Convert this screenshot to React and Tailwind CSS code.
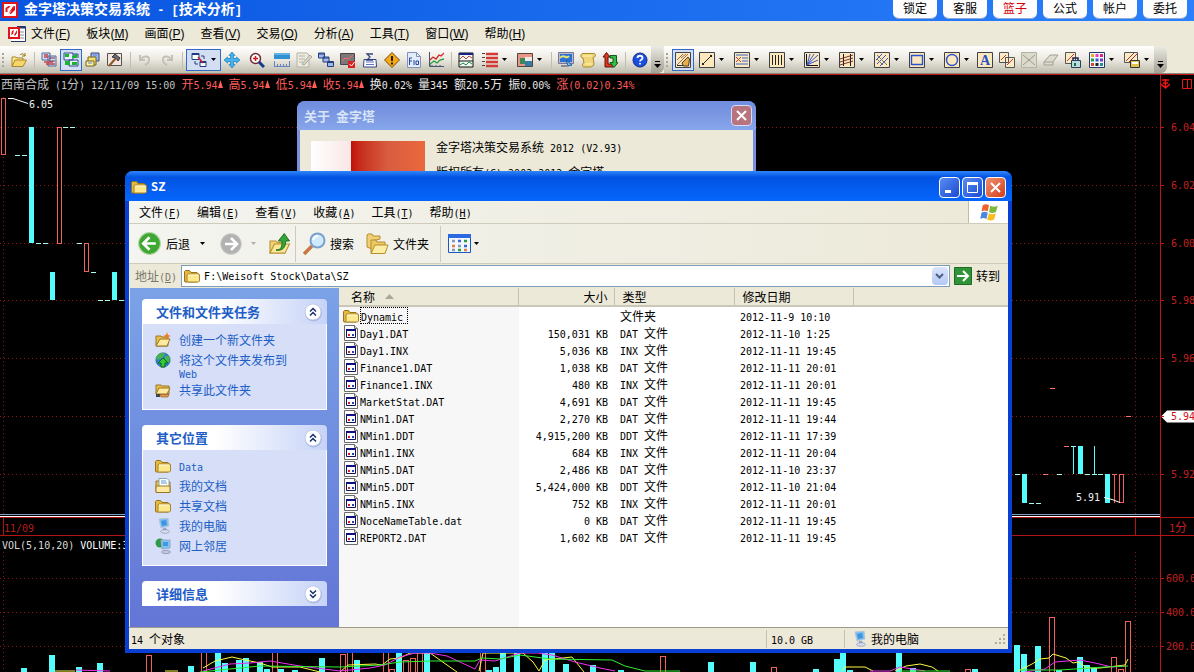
import { useState } from "react";

// Latin glyphs are half as wide as the Chinese ones
const Mix = ({ text }) => (
  <span className="whitespace-pre">
    {text.split(/([ -~]+)/).map((part, i) =>
      i % 2 ? (
        <span key={i} className="font-['DejaVu_Sans_Mono',monospace] text-[10px] leading-none">
          {part}
        </span>
      ) : (
        part
      )
    )}
  </span>
);

const Icon = ({ size = 16, children }) => (
  <svg width={size} height={size} viewBox="0 0 16 16" fill="none" className="shrink-0" aria-hidden="true">
    {children}
  </svg>
);

// yellow box shared by the drawing tools
const Tile = ({ children }) => (
  <Icon>
    <path d="M.5.5h15v15H.5z" fill="#fbe9bd" stroke="#404048" />
    {children}
  </Icon>
);

const Folder = ({ size = 16 }) => (
  <Icon size={size}>
    <path d="M.5 13V3.5l1-1h4l1.5 2h6l1 1V13l-1 1h-12z" fill="#e5b93e" stroke="#96731c" />
    <path d="M3 13.5V7l1-1h11l.5 1v6l-1 1H3.5z" fill="#fde88e" stroke="#a9832a" />
    <path d="M4 7h10" stroke="#fffbd8" />
  </Icon>
);

const Computer = ({ size = 16 }) => (
  <Icon size={size}>
    <path d="M4 1l9-1 1 8-8 2z" fill="#7cc0f2" stroke="#b8c6d8" />
    <path d="M6 3l5-1 1 5-5 1z" fill="#3f93e0" />
    <path d="M8 10h3l1 2H8z" fill="#9aa7c4" />
    <ellipse cx="10" cy="13.500" rx="4.500" ry="1.800" fill="#d7dcec" stroke="#7d87aa" strokeWidth=".6" />
  </Icon>
);

const Globe = () => (
  <>
    <circle cx="8" cy="8" r="7.200" fill="#2f7fd0" stroke="#1f5f86" strokeWidth=".6" />
    <path d="M2 4c3-4 7-3 8-2L8 5 5 7 1.500 8zM10 4l4 0c1 3 1 5-1 7l-3-2z" fill="#47b54a" />
  </>
);

const icons = {
  open: (
    <Icon>
      <path d="M1 14V5h4l1 1h6v3" fill="#fce693" stroke="#a8872a" />
      <path d="M1 14.500L4 8h11.500L12 14.500z" fill="#f6d66b" stroke="#a8872a" />
      <path d="M9 3c2-2 4-1 5 1m0-3v3h-3" stroke="#9b7410" />
    </Icon>
  ),
  report: (
    <Icon>
      <path d="M1 1h8v7H1zM7 4h8v10H7z" fill="#cfdff5" stroke="#53699c" />
      <path d="M3 3h4M3 5h4M3 10h9M5 12h9" stroke="#c3424f" strokeWidth="1.500" />
      <path d="M8 6h6M8 9h6" stroke="#7f3040" />
    </Icon>
  ),
  layout: (
    <Icon>
      <path d="M1 1h9v7H1zM6 8h9v6H6z" fill="#e9f1ff" stroke="#2d4c8c" />
      <path d="M2 2h4v3H2zM9 4l5-2v4H9zM2 9h5v4H2zM9 10h5v3H9z" fill="#19b52f" />
      <path d="M10 2h5v4" stroke="#2d4c8c" />
    </Icon>
  ),
  copy: (
    <Icon>
      <path d="M6 1h8v8H6z" fill="#9fb7ef" stroke="#38477d" />
      <path d="M3 5h8v8H3z" fill="#f7e06a" stroke="#6e6420" />
      <path d="M1 9h8v5H1z" fill="#fff3a4" stroke="#6e6420" />
      <path d="M3 11h4M8 3h4" stroke="#5a83d6" />
    </Icon>
  ),
  hammer: (
    <Icon>
      <path d="M.5 1.500h14v12H.5z" fill="#f3e4e1" stroke="#55524d" />
      <path d="M5 5l3-3 5 4-2 3-2-3z" fill="#6a6e7a" stroke="#2e3138" />
      <path d="M9 6L2 14" stroke="#8c5a27" strokeWidth="2" />
    </Icon>
  ),
  undo: (
    <Icon>
      <path d="M3 3v5h5M4 7c3-4 9-3 8 1 0 2-2 4-4 5" stroke="#c3c1b6" strokeWidth="2" />
    </Icon>
  ),
  redo: (
    <Icon>
      <path d="M13 3v5H8M12 7C9 3 3 4 4 8c0 2 2 4 4 5" stroke="#c3c1b6" strokeWidth="2" />
    </Icon>
  ),
  windows: (
    <Icon>
      <path d="M1 1.500h7v6H1zM9 9.500h6v5H9z" fill="#fff" stroke="#1c3c86" />
      <path d="M1 2h7M9 10h6" stroke="#1c3c86" strokeWidth="2" />
      <path d="M4 9v3h3M13 7V4h-3" stroke="#26407f" />
      <path d="M7 5l5 6" stroke="#c8202b" strokeWidth="1.500" />
    </Icon>
  ),
  move: (
    <Icon>
      <path
        d="M8 0l3 3.500H9.500v3h3V5L16 8l-3.500 3V9.500h-3v3H11L8 16l-3-3.500h1.500v-3h-3V11L0 8l3.500-3v1.500h3v-3H5z"
        fill="#45b4ee"
        stroke="#1878b8"
        strokeWidth=".7"
      />
    </Icon>
  ),
  zoom: (
    <Icon>
      <circle cx="6.500" cy="6.500" r="5" fill="#fff" stroke="#6d2a32" strokeWidth="1.500" />
      <path d="M4 6.500h5M6.500 4v5" stroke="#d01818" strokeWidth="1.500" />
      <path d="M10 10l5 5" stroke="#173a8e" strokeWidth="3" />
    </Icon>
  ),
  ruler: (
    <Icon>
      <path d="M0 1h16v6H0z" fill="#2f91d2" />
      <path d="M0 2h16" stroke="#9ad3f3" />
      <path d="M.5 9v6M3.500 12v3M6.500 12v3M9.500 12v3M12.500 12v3M15.500 9v6M0 14.500h16" stroke="#6484bd" />
    </Icon>
  ),
  note: (
    <Icon>
      <path d="M1 1h10l2 2v12H1z" fill="#eceadf" stroke="#b5b3a5" />
      <path d="M3 4h6M3 7h6M3 10h4" stroke="#b5b3a5" />
      <path d="M6 12L14 3l2 2-8 8z" fill="#d9d7c9" stroke="#a9a798" />
    </Icon>
  ),
  cascade: (
    <Icon>
      <path d="M.5 1h6v5h-6zM5 5h6v5H5zM9.500 9.500h6v5h-6z" fill="#9db9ee" stroke="#27407d" />
      <path d="M.5 2h6M5 6h6M9.500 10.500h6" stroke="#27407d" />
    </Icon>
  ),
  stop: (
    <Icon>
      <path d="M.5 1.500h14v11H.5z" fill="#7c7579" stroke="#494649" />
      <path d="M2 9l3-3 3 1 5-4" stroke="#ff6b6b" />
      <path d="M8 9h7v7H8z" fill="#db2020" />
      <path d="M9.500 12l2 2 3-4" stroke="#fff" />
    </Icon>
  ),
  sigma: (
    <Icon>
      <path d="M2 7.500L1.500 15h13L14 7.500z" fill="#fff" stroke="#33427f" />
      <path d="M11 2H5l3 3-3 3h6" stroke="#33427f" strokeWidth="1.300" />
      <path d="M4 10h8M4 12.500h8" stroke="#5a73c4" />
    </Icon>
  ),
  warn: (
    <Icon>
      <path d="M8 .5L15.500 8 8 15.500.5 8z" fill="#f5a81c" stroke="#7c4e0b" />
      <path d="M8 4v5M8 10.500v2" stroke="#2d1c00" strokeWidth="2" />
    </Icon>
  ),
  fio: (
    <Icon>
      <path d="M1.500.5h9l4 4v11h-13z" fill="#e3ecfb" stroke="#8193b8" />
      <path d="M10.500.5v4h4" stroke="#8193b8" />
      <path d="M3.500 13V6H6M3.500 9H6M8 8v5M10 9h2.500v3.500H10z" stroke="#27479f" />
    </Icon>
  ),
  lines: (
    <Icon>
      <path d="M1.500 0v14.500H16" stroke="#43536b" />
      <path d="M1 13h2M4 15v-2M8 15v-2M12 15v-2" stroke="#43536b" />
      <path d="M2 8l3-3 3 2 3-4 2 1 3-3" stroke="#d22a2a" strokeWidth="1.300" />
      <path d="M2 12l4-3 3 2 3-3 4-1" stroke="#2a9b3c" strokeWidth="1.300" />
    </Icon>
  ),
  split: (
    <Icon>
      <path d="M1 1h14v14H1z" fill="#f4f8f4" stroke="#111" />
      <path d="M1 2h14" stroke="#15208a" strokeWidth="2" />
      <path d="M1 9h14" stroke="#111" />
      <path d="M2 7l3-3 3 3 3-3 3 2" stroke="#c43" />
      <path d="M2 13l3-2 3 2 3-3 3 2" stroke="#284" />
    </Icon>
  ),
  redlist: (
    <Icon>
      <path d="M4 2h12M4 6h12M4 10h12M4 14h12" stroke="#d33a35" strokeWidth="2.600" />
      <path d="M0 1.500h3M0 5.500h3M0 9.500h3M0 13.500h3" stroke="#5e3838" />
    </Icon>
  ),
  palette: (
    <Icon>
      <path d="M.5 1.500h15v13H.5z" fill="#e9958a" stroke="#51463b" />
      <path d="M3 6h5v6H3z" fill="#3a8a56" />
      <path d="M8 5h7v4H8z" fill="#ecebe7" />
      <path d="M8 9h7v5H8z" fill="#397ba8" />
    </Icon>
  ),
  monitor: (
    <Icon>
      <path d="M.5.500h15v11H.5z" fill="#b9b9cf" stroke="#777896" />
      <path d="M2 2h12v8H2z" fill="#2e71d6" />
      <path d="M2 6c4-5 6 2 9-2" stroke="#e2e36c" strokeWidth="2" />
      <path d="M8 8l6 5-4 1z" fill="#78c2ee" stroke="#285a9c" />
      <path d="M3 14h7" stroke="#889" strokeWidth="2" />
    </Icon>
  ),
  scroll: (
    <Icon>
      <path
        d="M3 1.500h11c2 0 2 4-1 4l1 6c0 2-2 3.500-3 3.500H4c-2 0-2-4 0-4L3 6C0 6 0 2 3 1.500z"
        fill="#f0d678"
        stroke="#a68c34"
      />
      <path d="M3 4h9M5 12h7" stroke="#fff2b4" />
    </Icon>
  ),
  trade: (
    <Icon>
      <path d="M4.500.5L8 5H6v7h5v3H3V5H1z" fill="#e33420" stroke="#5c140c" />
      <path d="M8 3.500h6.500v7H16L12 15.500 8 10.500h3V6H8z" fill="#35bd45" stroke="#13571b" />
    </Icon>
  ),
  help: (
    <Icon>
      <circle cx="8" cy="8" r="7" fill="#1b4de0" stroke="#0c2a8a" />
      <path d="M5.500 6c0-3 5-3 5 0 0 2-2.500 1.500-2.500 3.500M8 11v1.500" stroke="#fff" strokeWidth="1.800" />
    </Icon>
  ),
  pencil: (
    <Icon>
      <path d="M.5.5h15v15H.5z" fill="#f7eacb" stroke="#404048" />
      <path d="M2 8l6-6M2 13L13 2M6 6l5-4" stroke="#a5682c" />
      <path d="M7 11l6-6 1.500 2-1 7h-5z" fill="#e9b04a" stroke="#4a3b26" />
      <path d="M2 13.500h6" stroke="#333" />
    </Icon>
  ),
  seg: (
    <Tile>
      <path d="M4 12l8-8" stroke="#222" />
      <path d="M3 11h2v2H3zM11 3h2v2h-2z" fill="#222" />
    </Tile>
  ),
  fib: (
    <Tile>
      <path d="M2 3h12M8 6h6M8 9h6M2 12h12" stroke="#3a63c8" />
      <path d="M2 5l5 5M7 5l-5 5" stroke="#d23838" />
    </Tile>
  ),
  bars: (
    <Tile>
      <path d="M3.500 3v10M6.500 3v10M9.500 3v10M12.500 3v10" stroke="#222" />
    </Tile>
  ),
  fan: (
    <Tile>
      <path d="M2.500 2v11.500H14" stroke="#111" />
      <path d="M3 13L6 2M3 13l7-11M3 13L14 3M3 13l11-5" stroke="#3858c8" />
    </Tile>
  ),
  gann: (
    <Tile>
      <path d="M4.500 2v12M11.500 2v12" stroke="#111" />
      <path d="M1 7l13-4M1 10l13-4M1 13l13-4" stroke="#7a3030" />
    </Tile>
  ),
  cross: (
    <Tile>
      <path d="M3 12L12 3M6 14l8-8M2 8l6-6" stroke="#3858c8" />
      <path d="M3 3l10 10M3 7l6 6" stroke="#777" />
    </Tile>
  ),
  rect: (
    <Tile>
      <path d="M2.500 3.500h11v9h-11z" stroke="#2a52d0" strokeWidth="1.400" />
    </Tile>
  ),
  circle: (
    <Tile>
      <circle cx="8" cy="8" r="5.500" stroke="#2a52d0" strokeWidth="1.400" />
    </Tile>
  ),
  letter: (
    <Tile>
      <text x="8" y="13" textAnchor="middle" fontSize="14" fontWeight="700" fill="#2450c8" fontFamily="Liberation Serif, serif">
        A
      </text>
    </Tile>
  ),
  dup: (
    <Icon>
      <path d="M.5.5h9v10h-9zM6.500 5.500h9v10h-9z" fill="#fbeac6" stroke="#555" />
      <path d="M2 8l5-5M8 13l6-6" stroke="#c33" />
    </Icon>
  ),
  del: (
    <Icon>
      <path d="M.5.5h15v15H.5z" fill="#dcdacb" stroke="#b4b2a2" />
      <path d="M2 3l12 10M14 3L2 13" stroke="#9d9b8c" />
    </Icon>
  ),
  eraser: (
    <Icon>
      <path d="M1 10l6-7h8l-5 7v3H1zM1 10h9" fill="#dddbce" stroke="#a2a092" />
    </Icon>
  ),
  lock: (
    <Icon>
      <path d="M.5.5h10v11H.5z" fill="#fbeac6" stroke="#555" />
      <path d="M2 9l7-7" stroke="#c33" />
      <path d="M8 9V6h5v3" stroke="#225" strokeWidth="1.500" />
      <path d="M6.500 8.500h9v7h-9z" fill="#bcd9e6" stroke="#245" />
      <path d="M10 11v3" stroke="#0a7a30" strokeWidth="2" />
    </Icon>
  ),
  colors: (
    <Icon>
      <path d="M.5.5h15v15H.5z" fill="#f3f6fb" stroke="#20386a" />
      <path d="M2 2h3v3H2z" fill="#e8b020" />
      <path d="M6.500 2h3v3h-3z" fill="#e63cc8" />
      <path d="M11 2h3v3h-3z" fill="#d62a80" />
      <path d="M2 6.500h3v3H2z" fill="#2a9a40" />
      <path d="M6.500 6.500h3v3h-3z" fill="#3555d8" />
      <path d="M11 6.500h3v3h-3z" fill="#7a3ac8" />
      <path d="M2 11h3v3H2z" fill="#d84b2a" />
      <path d="M6.500 11h3v3h-3z" fill="#222" />
      <path d="M11 11h3v3h-3z" fill="#288a9c" />
    </Icon>
  ),
  save: (
    <Icon>
      <path d="M.5.5h13v10H.5z" fill="#fbeac6" stroke="#555" />
      <path d="M2 9l8-8M5 10l8-8" stroke="#a33" />
      <path d="M6.500 8.500h9v7h-9z" fill="#e3c049" stroke="#333" />
      <path d="M8 11h6" stroke="#fff" strokeWidth="2" />
    </Icon>
  ),
};

// [icon, has drop-down, pressed]; "|" is a divider, "_" a narrow space
const mainTools = [
  ["open"], "|", ["report"], ["layout", false, true], ["copy"], ["hammer"], "|", ["undo"], ["redo"], "|",
  ["windows", true, true], ["move"], "_", ["zoom"], "_", ["ruler"], ["note"], ["cascade"], ["stop"], ["sigma"],
  ["warn"], ["fio"], ["lines"], "|", ["split"], ["redlist", true], ["palette", true], "|", ["monitor"],
  ["scroll"], ["trade"], "|", ["help"],
];

const drawTools = [
  ["pencil", false, true], ["seg", true], ["fib", true], ["bars", true], ["fan", true], ["gann", true],
  ["cross", true], ["rect", true], ["circle", true], ["letter"], ["dup"], ["del"], ["eraser"], ["lock"],
  ["colors", true], ["save", true],
];

const ToolStrip = ({ tools }) => (
  <div className="flex items-center h-[27px] rounded-r-md bg-gradient-to-b from-white via-[#ebe9e0] to-[#bfbdae]">
    <div className="w-2 pl-0.5">
      <svg width="2" height="16" aria-hidden="true">
        <path d="M1 1v15" stroke="#aaa898" strokeWidth="2" strokeDasharray="2 2" />
      </svg>
    </div>
    {tools.map((tool, i) => {
      if (tool === "_") return <span key={i} className="w-[3px]" />;
      if (tool === "|")
        return (
          <span key={i} className="flex justify-center w-2">
            <span className="w-px h-4 bg-[#c0beb0]" />
          </span>
        );
      const [name, drop, on] = tool;
      return (
        <button
          key={i}
          aria-label={name}
          className={`flex items-center h-[22px] border ${drop ? "w-[35px] pl-1 gap-1" : "w-[22px] justify-center"} ${
            on ? "border-[#316ac5] bg-[#d3def3]" : "border-transparent"
          }`}
        >
          {icons[name]}
          {drop && <Caret />}
        </button>
      );
    })}
    <span className="flex items-end justify-center w-[13px] h-[27px] pb-1 rounded-r-md bg-gradient-to-b from-[#ecebe4] to-[#a3a194]">
      <svg width="7" height="8" aria-hidden="true">
        <path d="M1 .5h5" stroke="#000" />
        <path d="M0 3h7L3.500 7z" fill="#000" />
      </svg>
    </span>
  </div>
);

const Caret = ({ color = "#000" }) => (
  <svg width="5" height="3" className="shrink-0" aria-hidden="true">
    <path d="M0 0h5L2.500 3z" fill={color} />
  </svg>
);

const AppLogo = () => (
  <Icon>
    <path d="M0 0h16v16H0z" fill="#e0141c" />
    <path d="M2 2h12v12H2z" fill="#fff" />
    <path d="M3.500 10V6l3-2h2l-2 2.500h-1V10zM6 12l5-7.500 2-.5v4l-4 4H7.500L10 8z" fill="#e0141c" />
  </Icon>
);

const mainMenu = [
  ["文件", "F"], ["板块", "M"], ["画面", "P"], ["查看", "V"], ["交易", "O"],
  ["分析", "A"], ["工具", "T"], ["窗口", "W"], ["帮助", "H"],
];
const topTabs = ["锁定", "客服", "篮子", "公式", "帐户", "委托"];

const MainHeader = () => (
  <header>
    <div className="flex justify-between h-[21px] bg-gradient-to-r from-[#0855e0] to-[#2b80fb]">
      <div className="flex items-center gap-1.5 pl-0.5 pb-0.5 text-white">
        <AppLogo />
        <h1 className="text-sm font-bold leading-4 whitespace-pre">
          金字塔决策交易系统<span className="font-['Liberation_Mono',monospace] text-[12px]"> - [</span>技术分析
          <span className="font-['Liberation_Mono',monospace] text-[12px]">]</span>
        </h1>
      </div>
      <div className="flex gap-1.5 pr-[7px]">
        {topTabs.map((t) => (
          <button
            key={t}
            className={`w-11 h-[19px] pb-0.5 rounded-b-md bg-[#fdfdfd] border-b border-[#8fa9d8] text-[12px] leading-4 ${
              t === "篮子" ? "text-[#d8000c]" : "text-black"
            }`}
          >
            {t}
          </button>
        ))}
      </div>
    </div>
    <nav className="flex items-center h-[25px] bg-[#ece9d8] font-['Liberation_Sans','Noto_Sans_CJK_SC',sans-serif] text-[12px]">
      <div className="flex items-center w-[31px] pl-2">
        <svg width="18" height="16" aria-hidden="true">
          <path d="M9 .5h8.500v15H3" fill="#fff" stroke="#26346f" />
          <path d="M9 1.500h8" stroke="#26346f" strokeWidth="2" />
          <path d="M12 6h4M12 9h4M12 12h4" stroke="#889" />
          <path d="M0 1h12v12H0z" fill="#e0141c" />
          <path d="M2 3h8v8H2z" fill="#fff" />
          <path d="M3 9l1-4 2-1-1 4zM6 9l3-5v3L7 10z" fill="#e0141c" />
        </svg>
      </div>
      <div className="flex gap-4">
        {mainMenu.map(([label, key]) => (
          <button key={key} className="whitespace-nowrap">
            {label}(<u>{key}</u>)
          </button>
        ))}
      </div>
    </nav>
    <div className="flex h-[27px] bg-[#ece9d8]">
      <ToolStrip tools={mainTools} />
      <ToolStrip tools={drawTools} />
    </div>
    <div className="h-0.5 bg-[#c01018] border-t border-[#8a8878]" />
  </header>
);

const quotes = [
  ["西南合成", "text-[#c0c0c0]"], ["(1分)", "text-[#c0c0c0]"], ["12/11/09", "text-[#c0c0c0]"],
  ["15:00", "text-[#c0c0c0]"], ["开5.94", "text-[#ff5c5c]", 1], ["高5.94", "text-[#ff5c5c]", 1],
  ["低5.94", "text-[#ff5c5c]", 1], ["收5.94", "text-[#ff5c5c]", 1], ["换0.02%", "text-[#e8e8e8]"],
  ["量345", "text-[#e8e8e8]"], ["额20.5万", "text-[#e8e8e8]"], ["振0.00%", "text-[#e8e8e8]"],
  ["涨(0.02)0.34%", "text-[#ff5c5c]"],
];

// candles: x, top, bottom
const downBars = [
  [29, 127, 243], [50, 272, 300], [112, 272, 300], [1022, 474, 503], [1078, 446, 474], [1105, 474, 503],
];
const upBars = [[1, 98, 154], [57, 127, 243], [84, 243, 271], [1119, 474, 502]];
const flats = [
  [15, 155], [22, 155], [63, 127], [70, 127], [36, 243], [43, 243], [77, 243], [91, 272], [98, 300],
  [105, 300], [119, 300], [1015, 474], [1057, 474], [1071, 446], [1085, 474], [1092, 474], [1098, 474],
  [1029, 503], [1036, 503],
];
const redFlats = [[1050, 388], [1126, 416], [1064, 446], [1043, 474], [1112, 474]];
const priceLevels = [
  [127, "6.04"], [185, "6.02"], [243, "6.00"], [300, "5.98"], [358, "5.96"], [416, "5.94"], [474, "5.92"],
];

// volume: x, top
const volDown = [
  [21, 668], [49, 655], [76, 667], [97, 663], [188, 666], [215, 653], [222, 663], [236, 660], [243, 658],
  [257, 662], [264, 669], [278, 669], [292, 670], [319, 658], [354, 660], [396, 653], [424, 653], [486, 670],
  [493, 667], [500, 653], [514, 653], [542, 653], [549, 653], [563, 664], [590, 665], [618, 670], [708, 662],
  [750, 662], [813, 669], [834, 659], [840, 653], [847, 670], [896, 653], [910, 668], [972, 669], [1014, 645],
  [1021, 654], [1035, 646], [1056, 670], [1077, 657], [1084, 665], [1091, 668],
];
const volUp = [
  [146, 655], [201, 650], [272, 650], [340, 654], [347, 650], [383, 650], [389, 669], [403, 660], [410, 658],
  [417, 650], [480, 650], [660, 656], [771, 667], [965, 669], [1049, 617], [1111, 657], [1118, 669], [1125, 621],
];
const volLevels = [[578, "600.0"], [612, "400.0"], [646, "200.0"]];

const Dots = ({ levels }) => (
  <g stroke="#8a1616" strokeDasharray="1 3">
    {levels.map(([y]) => (
      <path key={y} d={`M0 ${y + 0.5}H1160`} />
    ))}
  </g>
);

const PriceChart = () => (
  <svg className="block w-full h-[425px]" viewBox="0 92 1160 425" preserveAspectRatio="xMinYMin slice" role="img" aria-label="K线图">
    <Dots levels={priceLevels} />
    <path d="M3.500 97v417M1135.500 97v417" stroke="#8a1616" strokeDasharray="1 3" />
    {downBars.map(([x, a, b]) => (
      <rect key={x} x={x} y={a} width="5" height={b - a} fill="#54fcfc" />
    ))}
    {upBars.map(([x, a, b]) => (
      <rect key={x} x={x + 0.5} y={a + 0.5} width="4" height={b - a} fill="#000" stroke="#f0625c" />
    ))}
    {flats.map(([x, y]) => (
      <rect key={`${x}-${y}`} x={x} y={y} width="5" height="1" fill="#a8fcf4" />
    ))}
    {redFlats.map(([x, y]) => (
      <rect key={x} x={x} y={y} width="5" height="1" fill="#fc7068" />
    ))}
    <path d="M1073.500 446v28M1094.500 446v28" stroke="#54fcfc" />
    <path d="M1114.500 474v29" stroke="#fc5450" />
    <path d="M8 98.500h5l15 5M1104 497.500l8 2 8 3" stroke="#fff" fill="none" />
    <g fill="#f0f0f0" fontSize="10" fontFamily="DejaVu Sans Mono, monospace">
      <text x="29" y="108">6.05</text>
      <text x="1076" y="501">5.91</text>
    </g>
    <path d="M0 514.500h1160" stroke="#7f9cc0" />
    <path d="M0 516.500h1160" stroke="#fff" />
  </svg>
);

const VolumeChart = () => (
  <svg className="block w-full h-[120px]" viewBox="0 552 1160 120" preserveAspectRatio="xMinYMin slice" role="img" aria-label="成交量">
    <Dots levels={volLevels} />
    <path d="M3.500 552v120M1135.500 552v120" stroke="#8a1616" strokeDasharray="1 3" />
    {volUp.map(([x, y]) => (
      <rect key={x} x={x + 0.5} y={y + 0.5} width="5" height="60" fill="#000" stroke="#f0625c" />
    ))}
    {volDown.map(([x, y]) => (
      <rect key={x} x={x} y={y} width="6" height="40" fill="#54fcfc" />
    ))}
    <g fill="none">
      <path
        stroke="#fcfc40"
        d="M55 671h20M165 671h13M203 668l12-7 17-4 13 3 15 3 12 4h28l20 5M340 672l8-7 27-1 7 1 8-6 10-1 10-5h20l27 19M479 671l4-18h40l10 9 6 9 6-11 27-3 12 15M842 671l3-4h20l8 4M895 671l11-5 14-2 12 3 6 4M1018 671l14-7 8-5 9-1 4-4 13 4 7 5 5-1 9 6h13l25-3 3-6"
      />
      <path
        stroke="#f030f0"
        d="M76 670l34 1M203 671l27-7 20-1 20-2 30 5 40 5 30-3 15-3 15-8 15-4h15l17 3 13 6 15 7 5-9 15 1 25-8h18l14 2 23 7 25 6 15 3M870 671h20l10-4 25 4M1025 672l20-3 10-7 25-2 15 3 17 4 13-1"
      />
      <path
        stroke="#30f030"
        d="M200 672l60-6 80 1 40-2 20-3 30-1h45l7-3 18 1 20-4 30 4 62 1 13 6 20 5h35M900 671h50M1020 670h40l45-3 23-1"
      />
    </g>
  </svg>
);

const StockChart = () => (
  <main className="flex bg-black text-[12px]">
    <section className="flex-1 min-w-0">
      <div className="flex items-center gap-1.5 h-[17px] pl-px leading-4">
        {quotes.map(([text, color, up]) => (
          <span key={text} className={`flex items-center ${color}`}>
            <Mix text={text} />
            {up && (
              <svg width="5" height="8" aria-hidden="true">
                <path d="M2.500 0L5 8H0z" fill="#ff5c5c" />
              </svg>
            )}
          </span>
        ))}
      </div>
      <PriceChart />
      <div className="flex items-center justify-between h-[19px] pl-[3px] pr-6 border-y border-[#b01414] text-[#b41c1c]">
        <span className="border-l border-[#b01414] leading-[17px]">
          <Mix text="11/09" />
        </span>
        <span className="w-px h-full bg-[#b01414]" />
      </div>
      <div className="flex gap-1.5 h-4 pl-0.5 text-[#d8d8d8] leading-4">
        <Mix text="VOL(5,10,20)" />
        <span className="text-white">
          <Mix text="VOLUME:345.000" />
        </span>
      </div>
      <VolumeChart />
    </section>
    <aside className="w-[34px] shrink-0 overflow-hidden border-l border-[#c01414] text-[#c02020]">
      <div className="flex items-center gap-3 h-[17px]">
        <svg width="9" height="10" className="shrink-0" aria-hidden="true">
          <path d="M4.500 0v9M1 1h7M0 5l4.500 4L9 5M2 4h5" stroke="#f01414" strokeWidth="1.500" fill="none" />
        </svg>
        <svg width="10" height="10" className="shrink-0" aria-hidden="true">
          <path d="M.5.5h9v9h-9zM5.500 0v10" stroke="#f01414" fill="none" />
        </svg>
      </div>
      <svg className="block h-[425px]" width="33" viewBox="0 92 33 425" aria-hidden="true">
        <path d="M0 416.500l6-6h27v12H6z" fill="#fff" />
        {priceLevels.map(([y, label]) => (
          <g key={y}>
            <path d={`M0 ${y + 0.5}h3`} stroke="#c01414" />
            <text x="10" y={y + 4} fill={label === "5.94" ? "#d01010" : "#c02020"} fontSize="10" fontFamily="DejaVu Sans Mono, monospace">
              {label}
            </text>
          </g>
        ))}
      </svg>
      <div className="h-[19px] pl-2 border-y border-[#b01414] leading-[17px]">
        <Mix text="1分" />
      </div>
      <svg className="block h-[136px]" width="33" viewBox="0 536 33 136" aria-hidden="true">
        {volLevels.map(([y, label]) => (
          <g key={y}>
            <path d={`M0 ${y + 0.5}h3`} stroke="#c01414" />
            <text x="5" y={y + 4} fill="#c02020" fontSize="10" fontFamily="DejaVu Sans Mono, monospace">
              {label}
            </text>
          </g>
        ))}
      </svg>
    </aside>
  </main>
);

const AboutDialog = () => (
  <div className="absolute left-[297px] top-[101px] w-[459px] h-[110px] px-[3px] rounded-t-lg bg-[#7a8fdd]">
    <div className="flex items-center justify-between -mx-[3px] h-[29px] pl-[7px] pr-1 rounded-t-lg bg-gradient-to-b from-[#6f8ce0] via-[#7c98e2] to-[#86a6ec] text-[13px] font-bold text-[#d8e4f8]">
      <span>关于&nbsp; 金字塔</span>
      <button aria-label="关闭" className="grid place-items-center w-[21px] h-[21px] rounded border border-[#d8dcf4] bg-[#b8747e]">
        <svg width="11" height="11" aria-hidden="true">
          <path d="M1 1l9 9M10 1l-9 9" stroke="#fff" strokeWidth="2" />
        </svg>
      </button>
    </div>
    <div className="flex gap-[11px] h-20 pl-[11px] pt-[11px] bg-[#ece9d8] text-[12px]">
      <div className="flex w-[114px] h-16">
        <div className="w-10 bg-gradient-to-r from-white to-[#fbe6e6]" />
        <div className="flex-1 bg-gradient-to-r from-[#c01008] via-[#d85c40] to-[#ea683c]" />
      </div>
      <div className="leading-3">
        <p>
          <Mix text="金字塔决策交易系统 2012 (V2.93)" />
        </p>
        <p className="pt-3">
          <Mix text="版权所有(C) 2002-2012 金字塔" />
        </p>
      </div>
    </div>
  </div>
);

const files = [
  ["Dynamic", "", "文件夹", "2012-11-9 10:10"],
  ["Day1.DAT", "150,031 KB", "DAT 文件", "2012-11-10 1:25"],
  ["Day1.INX", "5,036 KB", "INX 文件", "2012-11-11 19:45"],
  ["Finance1.DAT", "1,038 KB", "DAT 文件", "2012-11-11 20:01"],
  ["Finance1.INX", "480 KB", "INX 文件", "2012-11-11 20:01"],
  ["MarketStat.DAT", "4,691 KB", "DAT 文件", "2012-11-11 19:45"],
  ["NMin1.DAT", "2,270 KB", "DAT 文件", "2012-11-11 19:44"],
  ["NMin1.DDT", "4,915,200 KB", "DDT 文件", "2012-11-11 17:39"],
  ["NMin1.INX", "684 KB", "INX 文件", "2012-11-11 20:04"],
  ["NMin5.DAT", "2,486 KB", "DAT 文件", "2012-11-10 23:37"],
  ["NMin5.DDT", "5,424,000 KB", "DDT 文件", "2012-11-10 21:04"],
  ["NMin5.INX", "752 KB", "INX 文件", "2012-11-11 20:01"],
  ["NoceNameTable.dat", "0 KB", "DAT 文件", "2012-11-11 19:45"],
  ["REPORT2.DAT", "1,602 KB", "DAT 文件", "2012-11-11 19:45"],
];

const FileIcon = () => (
  <Icon>
    <path d="M1.500.5h10l3 3v12h-13z" fill="#fff" stroke="#6c6c6c" />
    <path d="M11.500.5v3h3" fill="#ddd" stroke="#6c6c6c" />
    <path d="M3.500 4.500h9v8h-9z" fill="#fff" stroke="#101060" />
    <path d="M3 5h10" stroke="#101080" strokeWidth="2" />
    <path d="M5 9h2v2H5z" fill="#d02020" />
    <path d="M9 9h2v2H9z" fill="#2040c0" />
  </Icon>
);

const FileTable = () => (
  <div className="flex-1 bg-[linear-gradient(to_right,#f7f7f7_180px,#fff_180px)]">
    <table className="w-full table-fixed border-collapse text-[12px] leading-[17px] whitespace-nowrap">
      <colgroup>
        <col className="w-[179px]" />
        <col className="w-24" />
        <col className="w-[120px]" />
        <col className="w-[119px]" />
        <col />
      </colgroup>
      <thead className="bg-[#ece9d8] border-b-2 border-[#cbc7b8] text-left">
        <tr className="h-[17px]">
          <th scope="col" className="pl-3 font-normal border-r border-[#c6c2b0]">
            <span className="flex items-center gap-2.5">
              名称
              <svg width="9" height="5" aria-hidden="true">
                <path d="M4.500 0L9 5H0z" fill="#aca899" />
              </svg>
            </span>
          </th>
          <th scope="col" className="pr-1.5 text-right font-normal border-r border-[#c6c2b0]">大小</th>
          <th scope="col" className="pl-2 font-normal border-r border-[#c6c2b0]">类型</th>
          <th scope="col" className="pl-2 font-normal border-r border-[#c6c2b0]">修改日期</th>
          <th />
        </tr>
      </thead>
      <tbody>
        {files.map(([name, size, type, date], i) => (
          <tr key={name} className="h-[17px]">
            <td className="pl-1">
              <span className="flex items-center gap-px h-[17px]">
                {i === 0 ? <Folder /> : <FileIcon />}
                <span className={i === 0 ? "h-[17px] pr-1 leading-[15px] border border-dotted border-black" : ""}>
                  <Mix text={name} />
                </span>
              </span>
            </td>
            <td className="pr-1.5 text-right"><Mix text={size} /></td>
            <td className="pl-1.5"><Mix text={type} /></td>
            <td className="pl-1.5"><Mix text={date} /></td>
            <td />
          </tr>
        ))}
      </tbody>
    </table>
  </div>
);

const NewFolder = () => (
  <Icon>
    <path d="M1 4h5l1 1h6v9H1z" fill="#e9bd4a" stroke="#9a7725" />
    <path d="M1 14L5 7h10l-3 7z" fill="#fdeaa0" stroke="#9a7725" />
    <path d="M12 0l1 3 3 1-3 1-1 3-1-3-3-1 3-1z" fill="#f07820" />
  </Icon>
);

const Publish = () => (
  <Icon>
    <Globe />
    <path d="M8 6l5 5h-3v4H6v-4H3z" fill="#37c837" stroke="#0c6a18" />
  </Icon>
);

const Share = () => (
  <Icon>
    <path d="M1 3h5l1 1h7v8H1z" fill="#e9bd4a" stroke="#9a7725" />
    <path d="M1 12l3-6h11l-3 6z" fill="#fdeaa0" stroke="#9a7725" />
    <path d="M1 12h4v3H1z" fill="#444" />
    <path d="M5 13c3-2 5 1 9-1l-1 3H6z" fill="#e89a50" stroke="#8a5020" strokeWidth=".6" />
  </Icon>
);

const Documents = () => (
  <Icon>
    <path d="M1 14V3h4l1 1h9v10z" fill="#e9bd4a" stroke="#9a7725" />
    <path d="M4 .5h8l2 2V9H4z" fill="#fff" stroke="#8aa" />
    <path d="M6 3h5M6 5h6" stroke="#5a9ad8" />
    <path d="M1 14.500V8h14v6.500z" fill="#fdeaa0" stroke="#9a7725" />
  </Icon>
);

const Network = () => (
  <Icon>
    <circle cx="5" cy="5" r="4.500" fill="#2f9a4a" />
    <path d="M6 2l9 0v8l-8 1z" fill="#7cc4f4" stroke="#9aa7c4" />
    <path d="M8 4h5v4H8z" fill="#4298e0" />
    <ellipse cx="11" cy="14" rx="4.500" ry="1.600" fill="#c5cae4" stroke="#6b7498" strokeWidth=".6" />
  </Icon>
);

const taskLinks = [
  [<NewFolder />, "创建一个新文件夹"],
  [<Publish />, "将这个文件夹发布到", "Web"],
  [<Share />, "共享此文件夹"],
];
const placeLinks = [
  [<Folder />, "Data"],
  [<Documents />, "我的文档"],
  [<Folder />, "共享文档"],
  [<Computer />, "我的电脑"],
  [<Network />, "网上邻居"],
];

const SidePanel = ({ title, links, startOpen = true }) => {
  const [open, setOpen] = useState(startOpen);
  return (
    <section>
      <button
        onClick={() => setOpen(!open)}
        className="flex items-center justify-between w-full h-[25px] pl-3.5 pr-1 rounded-t bg-gradient-to-r from-white from-40% to-[#c6d3f7] text-[13px] font-bold text-[#215dc6]"
      >
        {title}
        <svg width="20" height="20" viewBox="0 0 20 20" aria-hidden="true">
          <circle cx="10.500" cy="11" r="8.500" fill="#a9b8e0" />
          <circle cx="10" cy="10" r="8" fill="#fff" stroke="#b8c4e6" strokeWidth=".8" />
          <path
            d={open ? "M7 9.500l3-3 3 3M7 13.500l3-3 3 3" : "M7 6.500l3 3 3-3M7 10.500l3 3 3-3"}
            fill="none"
            stroke="#16306e"
            strokeWidth="1.500"
          />
        </svg>
      </button>
      {open && (
        <ul className="px-3 pt-1.5 pb-[9px] border border-t-0 border-white bg-[#d6dff7]">
          {links.map(([icon, text, more]) => (
            <li key={text}>
              <a href="#" className="flex gap-2 py-0.5 text-[12px] leading-4 text-[#215dc6]">
                {icon}
                <span>
                  <Mix text={text} />
                  {more && (
                    <span className="block h-2.5 leading-[10px]">
                      <Mix text={more} />
                    </span>
                  )}
                </span>
              </a>
            </li>
          ))}
        </ul>
      )}
    </section>
  );
};

const explorerMenu = [["文件", "F"], ["编辑", "E"], ["查看", "V"], ["收藏", "A"], ["工具", "T"], ["帮助", "H"]];

const CaptionButton = ({ label, red, children }) => (
  <button
    aria-label={label}
    className={`grid place-items-center w-[21px] h-[21px] rounded border border-white bg-gradient-to-br ${
      red ? "from-[#f09070] to-[#d03a10]" : "from-[#5a8cf4] to-[#1c48d0]"
    }`}
  >
    <svg width="13" height="13" fill="none" stroke="#fff" aria-hidden="true">
      {children}
    </svg>
  </button>
);

const Explorer = () => {
  const [path, setPath] = useState("F:\\Weisoft Stock\\Data\\SZ");
  return (
    <div className="absolute left-[125px] top-[171px] w-[887px] px-1 pb-1 rounded-t-lg bg-[#0a3fd4] text-[12px] text-black">
      <div className="flex items-center justify-between -mx-1 h-[30px] px-1.5 pt-0.5 rounded-t-lg bg-gradient-to-b from-[#2f86fb] via-[#0353e2] via-20% to-[#0566fd]">
        <div className="flex items-center gap-1 text-white">
          <Folder />
          <span className="font-['DejaVu_Sans_Mono',monospace] text-[12px] font-bold">SZ</span>
        </div>
        <div className="flex gap-0.5">
          <CaptionButton label="最小化"><path d="M2 10.500h6" strokeWidth="3" /></CaptionButton>
          <CaptionButton label="最大化"><path d="M1.500 2v9.500h10V2M1 2.500h11" strokeWidth="1" /><path d="M1 2.500h11" strokeWidth="3" /></CaptionButton>
          <CaptionButton label="关闭" red><path d="M2 2l9 9M11 2l-9 9" strokeWidth="2" /></CaptionButton>
        </div>
      </div>

      <div className="bg-[#ece9d8]">
        <div className="flex justify-between h-[23px] border-b border-[#d0ccbc] bg-gradient-to-r from-[#f4f4f0] to-[#ece9d8]">
          <div className="flex items-center gap-4 pl-2.5">
            {explorerMenu.map(([label, key]) => (
              <button key={key} className="whitespace-nowrap">
                <Mix text={label + "("} />
                <u><Mix text={key} /></u>
                <Mix text=")" />
              </button>
            ))}
          </div>
          <div className="grid place-items-center w-10 bg-white border-l border-[#c0bcac]">
            <Icon size={20}>
              <path d="M3 2.500c2-1 3-1 5 0L7 7.500c-2-1-3-1-5 0z" fill="#ee6230" />
              <path d="M9 3c2 1 4 1 6 0l-1.500 5c-2 1-4 1-5.500 0z" fill="#7cb83c" />
              <path d="M2 8.500c2-1 3-1 5 0l-1 5c-2-1-3-1-5 0z" fill="#4a86e0" />
              <path d="M8 9c1.500 1 3.500 1 5.500 0L12 14c-2 1-4 1-5.500 0z" fill="#fbbc20" />
            </Icon>
          </div>
        </div>

        <div className="flex items-center h-10 pl-2 border-b border-[#d0ccbc] bg-gradient-to-r from-[#f4f4f0] to-[#ece9d8]">
          <button className="flex items-center gap-1 w-[82px]">
            <svg width="25" height="25" viewBox="0 0 24 24" aria-hidden="true">
              <circle cx="12" cy="12" r="10.500" fill="#3fa833" stroke="#b8d8ac" />
              <path d="M12 6l-6 6 6 6M7 12h11" fill="none" stroke="#fff" strokeWidth="2.600" />
            </svg>
            <span className="pr-1.5">后退</span>
            <Caret />
          </button>
          <button aria-label="前进" className="flex items-center gap-2 w-[46px]">
            <svg width="24" height="24" viewBox="0 0 24 24" aria-hidden="true">
              <circle cx="12" cy="12" r="10.500" fill="#b2b2b2" stroke="#d4d4d0" />
              <path d="M12 6l6 6-6 6M6 12h11" fill="none" stroke="#fff" strokeWidth="2.600" />
            </svg>
            <Caret color="#b4b2a6" />
          </button>
          <button aria-label="向上" className="w-[30px] pl-0.5">
            <Icon size={24}>
              <path d="M2 14V6h4l1 1h5v7z" fill="#f4d070" stroke="#b89030" strokeWidth=".7" />
              <path d="M2 14l3-6h10l-3 6z" fill="#fbe89a" stroke="#b89030" strokeWidth=".7" />
              <path d="M6 12c4 0 4-3 4-6H7.500L11.500 1 15 6h-2.500c0 4-2 7-6.500 6z" fill="#35a535" stroke="#176a1a" strokeWidth=".6" />
            </Icon>
          </button>
          <span className="w-px h-9 bg-[#cfcbbb]" />
          <button className="flex items-center gap-1 w-[70px] pl-[7px]">
            <svg width="23" height="24" viewBox="0 0 23 24" aria-hidden="true">
              <path d="M9 14l-8 8" stroke="#c87840" strokeWidth="3.500" />
              <circle cx="14.500" cy="8.500" r="7" fill="#cfeafc" stroke="#7aa0d0" strokeWidth="2" />
              <path d="M10 8c1-3 3-4 5-4" fill="none" stroke="#fff" strokeWidth="2" />
            </svg>
            搜索
          </button>
          <button className="flex items-center gap-1 w-[74px]">
            <svg width="23" height="22" viewBox="0 0 23 22" aria-hidden="true">
              <path d="M1 14V2l1-1h4l1 2h7v3L6 8v8z" fill="#f2d076" stroke="#b48d2c" />
              <path d="M5 20V7h5l1 2h8v11z" fill="#eec860" stroke="#b48d2c" />
              <path d="M5 20.500L9 12h13l-3 8.500z" fill="#fdeea6" stroke="#b48d2c" />
            </svg>
            文件夹
          </button>
          <span className="w-px h-9 bg-[#cfcbbb]" />
          <button aria-label="查看方式" className="flex items-center gap-[3px] pl-[7px]">
            <svg width="23" height="19" viewBox="0 0 23 19" aria-hidden="true">
              <path d="M.5.500h22v18H.5z" fill="#f4f8fe" stroke="#1c58c4" />
              <path d="M0 2h23" stroke="#2a6ae0" strokeWidth="4" />
              <path d="M4 7h3M10 12h3M4 16h3" stroke="#8898b8" strokeWidth="2.500" />
              <path d="M10 7h3M16 12h3" stroke="#3468d8" strokeWidth="2.500" />
              <path d="M16 7h3M10 16h3" stroke="#2a9a44" strokeWidth="2.500" />
              <path d="M4 12h3M16 16h3" stroke="#e08048" strokeWidth="2.500" />
            </svg>
            <Caret />
          </button>
        </div>

        <div className="flex items-center gap-1 h-6 pl-1.5 pr-2">
          <label htmlFor="address" className="text-[#7a786c] whitespace-nowrap">
            <Mix text="地址(" />
            <u><Mix text="D" /></u>
            <Mix text=")" />
          </label>
          <div className="flex flex-1 items-center gap-1 h-[22px] pl-0.5 pr-px border border-[#7f9db9] bg-white">
            <Folder />
            <input
              id="address"
              value={path}
              onChange={(e) => setPath(e.target.value)}
              className="flex-1 font-['DejaVu_Sans_Mono',monospace] text-[10px] outline-none"
            />
            <button aria-label="展开地址" className="grid place-items-center w-4 h-[18px] rounded-sm bg-gradient-to-b from-[#dbe5fc] to-[#b4c8f4]">
              <svg width="9" height="6" aria-hidden="true">
                <path d="M1 1l3.500 3.500L8 1" fill="none" stroke="#4d6185" strokeWidth="2" />
              </svg>
            </button>
          </div>
          <button className="flex items-center gap-1">
            <svg width="18" height="18" aria-hidden="true">
              <path d="M.5.5h17v17H.5z" fill="#2f9438" stroke="#1c6a24" />
              <path d="M3 9h10M9 4l5 5-5 5" fill="none" stroke="#fff" strokeWidth="2" />
            </svg>
            转到
          </button>
        </div>

        <div className="flex h-[339px] pl-px">
          <div className="flex flex-col gap-[15px] w-[209px] px-3 pt-[11px] bg-gradient-to-b from-[#7ba2e7] to-[#6375d6]">
            <SidePanel title="文件和文件夹任务" links={taskLinks} />
            <SidePanel title="其它位置" links={placeLinks} />
            <SidePanel title="详细信息" links={[[<Folder />, "SZ"]]} startOpen={false} />
          </div>
          <FileTable />
        </div>

        <footer className="flex items-center h-[22px] border-t border-[#9d9a8c]">
          <span className="flex-1 pl-0.5"><Mix text="14 个对象" /></span>
          <span className="w-[78px] pl-1 border-l border-[#c6c2b0]"><Mix text="10.0 GB" /></span>
          <span className="flex items-center gap-1 w-[164px] pl-1.5 border-l border-[#c6c2b0]">
            <Computer />
            我的电脑
            <svg width="14" height="14" className="ml-auto" aria-hidden="true">
              <path d="M10 2v12M6 6v8M2 10v4" stroke="#b0ac9c" strokeWidth="2" strokeDasharray="2 2" />
            </svg>
          </span>
        </footer>
      </div>
    </div>
  );
};

export default function App() {
  return (
    <div className="relative min-h-screen overflow-hidden bg-black font-['Noto_Sans_CJK_SC',sans-serif] text-black">
      <MainHeader />
      <StockChart />
      <AboutDialog />
      <Explorer />
    </div>
  );
}
